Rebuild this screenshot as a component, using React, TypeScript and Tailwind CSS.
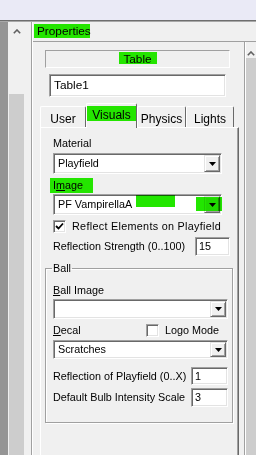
import React from "react";

const sunken =
  "border border-t-[#a0a0a0] border-l-[#a0a0a0] border-r-white border-b-white shadow-[inset_1px_1px_0_#696969,inset_-1px_-1px_0_#e3e3e3]";
const raised =
  "border border-t-[#e3e3e3] border-l-[#e3e3e3] border-r-[#696969] border-b-[#696969] shadow-[inset_1px_1px_0_#ffffff,inset_-1px_-1px_0_#a0a0a0]";

function Arrow() {
  return (
    <svg width="7" height="4" viewBox="0 0 7 4">
      <polygon points="0,0 7,0 3.5,4" fill="#000" />
    </svg>
  );
}

function Chevron() {
  return (
    <svg width="8" height="5" viewBox="0 0 8 5">
      <polyline points="0.8,4.2 4,1 7.2,4.2" fill="none" stroke="#606060" strokeWidth="1.6" />
    </svg>
  );
}

function Combo({ text, w, h, ml }: { text: string; w: string; h: string; ml: string }) {
  return (
    <div className={`${w} ${h} ${ml} ${sunken} bg-white flex items-stretch p-px`}>
      <div className="flex-1 flex items-center pl-[3px] leading-none">{text}</div>
      <div className={`w-[16px] ${raised} bg-[#f0f0f0] flex items-center justify-center`}>
        <Arrow />
      </div>
    </div>
  );
}

function Check({ checked }: { checked: boolean }) {
  return (
    <div className={`w-[13px] h-[13px] ${sunken} bg-white flex items-center justify-center shrink-0`}>
      {checked && (
        <svg width="9" height="9" viewBox="0 0 9 9">
          <path d="M1 4 L3.5 6.5 L8 1.5" fill="none" stroke="#000" strokeWidth="1.8" />
        </svg>
      )}
    </div>
  );
}

const tabBase =
  "border-t border-l border-t-white border-l-white border-r border-r-[#696969] rounded-t-[2px] flex items-start justify-center";

export default function App() {
  return (
    <div className="relative w-[256px] h-[455px] overflow-hidden bg-[#f0f0f0] flex flex-col font-['Liberation_Sans',Arial,sans-serif] text-[10.8px] text-black leading-[13px]">
      <div className="h-[20px] shrink-0 bg-[#eaeaf6]" />
      <div className="h-px shrink-0 bg-[#6e6e6e]" />
      <div className="h-px shrink-0 bg-[#a8a8a8]" />
      <div className="flex flex-1 min-h-0">
        {/* left strip */}
        <div className="w-[8px] bg-[#959595]" />
        <div className="w-[17px] flex flex-col bg-[#f0f0f0]">
          <div className="h-[72px] flex justify-center pt-[7px]">
            <Chevron />
          </div>
          <div className="flex-1 bg-[#cdcdcd] mx-px" />
        </div>
        <div className="w-[6px] bg-[#f0f0f0]" />
        <div className="w-px bg-[#a0a0a0]" />
        <div className="w-px bg-white" />
        {/* right area */}
        <div className="flex-1 flex flex-col min-w-0">
          <div className="h-[19px] flex items-center pl-[4px] text-[11.8px]">Properties</div>
          <div className="h-px bg-[#a0a0a0]" />
          <div className="flex flex-1 min-h-0">
            <div className="w-[211px] flex flex-col">
              <div className="mt-[8px] ml-[12px] w-[185px] h-[18px] border border-t-[#a0a0a0] border-l-[#a0a0a0] border-r-white border-b-white flex items-center justify-center text-[11.8px]">
                Table
              </div>
              <div className={`mt-[6px] ml-[16px] w-[177px] h-[23px] ${sunken} bg-white flex items-center pl-[4px] text-[11.8px]`}>
                Table1
              </div>
              {/* tabs */}
              <div className="mt-[6px] ml-[7px] h-[25px] -mb-px flex items-end relative z-10 text-[12px]">
                <div className={`w-[46px] h-[21px] mb-px pt-[6px] ${tabBase}`}>User</div>
                <div className={`w-[51px] h-[25px] pt-[5px] bg-[#f0f0f0] ${tabBase}`}>Visuals</div>
                <div className={`w-[49px] h-[21px] mb-px pt-[6px] ${tabBase}`}>Physics</div>
                <div className={`w-[48px] h-[21px] mb-px pt-[6px] ${tabBase}`}>Lights</div>
              </div>
              {/* tab panel */}
              <div className="ml-[7px] w-[199px] flex-1 border-t border-l border-t-white border-l-white border-r border-r-[#696969] shadow-[inset_-1px_0_0_#a0a0a0] flex flex-col">
                <div className="mt-[9px] ml-[12px] h-[13px]">Material</div>
                <div className="mt-[3px]">
                  <Combo text="Playfield" w="w-[169px]" h="h-[21px]" ml="ml-[12px]" />
                </div>
                <div className="mt-[5px] ml-[12px] h-[13px]">
                  I<span className="underline">m</span>age
                </div>
                <div className="mt-[2px]">
                  <Combo text="PF VampirellaA" w="w-[169px]" h="h-[21px]" ml="ml-[12px]" />
                </div>
                <div className="mt-[5px] ml-[12px] h-[13px] flex items-center gap-[6px]">
                  <Check checked />
                  <span className="tracking-[0.3px]">Reflect Elements on Playfield</span>
                </div>
                <div className="mt-[4px] ml-[12px] w-[177px] h-[19px] flex items-center">
                  <span>Reflection Strength (0..100)</span>
                  <div className={`ml-auto w-[35px] h-[19px] ${sunken} bg-white flex items-center pl-[3px]`}>15</div>
                </div>
                <fieldset className="mt-[6px] ml-[4px] w-[188px] p-0 m-0 border border-[#a0a0a0] shadow-[1px_1px_0_#ffffff,inset_1px_1px_0_#ffffff] flex flex-col pb-[15px]">
                  <legend className="ml-[6px] px-[1px] h-[13px] leading-[13px]">Ball</legend>
                  <div className="mt-[9px] ml-[7px] h-[13px]">
                    <span className="underline">B</span>all Image
                  </div>
                  <div className="mt-[2px]">
                    <Combo text="" w="w-[175px]" h="h-[20px]" ml="ml-[7px]" />
                  </div>
                  <div className="mt-[5px] ml-[7px] h-[13px] flex items-center">
                    <span className="w-[93px]">
                      <span className="underline">D</span>ecal
                    </span>
                    <Check checked={false} />
                    <span className="ml-[6px]">Logo Mode</span>
                  </div>
                  <div className="mt-[3px]">
                    <Combo text="Scratches" w="w-[175px]" h="h-[19px]" ml="ml-[7px]" />
                  </div>
                  <div className="mt-[8px] ml-[7px] w-[175px] h-[18px] flex items-center">
                    <span>Reflection of Playfield (0..X)</span>
                    <div className={`ml-auto w-[37px] h-[18px] ${sunken} bg-white flex items-center pl-[3px]`}>1</div>
                  </div>
                  <div className="mt-[3px] ml-[7px] w-[175px] h-[19px] flex items-center">
                    <span>Default Bulb Intensity Scale</span>
                    <div className={`ml-auto w-[37px] h-[19px] ${sunken} bg-white flex items-center pl-[3px]`}>3</div>
                  </div>
                </fieldset>
              </div>
            </div>
            <div className="w-px bg-[#a0a0a0]" />
            <div className="w-px bg-white" />
            <div className="flex-1 flex flex-col">
              <div className="h-[16px] flex justify-center pt-[9px]">
                <Chevron />
              </div>
              <div className="flex-1 bg-[#cdcdcd]" />
            </div>
          </div>
        </div>
      </div>

      {/* green annotation highlights */}
      <div className="absolute z-20 left-[34px] top-[24px] w-[56px] h-[14px] bg-[#26f400] mix-blend-multiply" />
      <div className="absolute z-20 left-[119px] top-[52px] w-[38px] h-[12px] bg-[#26f400] mix-blend-multiply" />
      <div className="absolute z-20 left-[87px] top-[106px] w-[49px] h-[15px] bg-[#26f400] mix-blend-multiply" />
      <div className="absolute z-20 left-[50px] top-[178px] w-[43px] h-[15px] bg-[#26f400] mix-blend-multiply" />
      <div className="absolute z-20 left-[136px] top-[195px] w-[39px] h-[12px] bg-[#22e600] mix-blend-multiply" />
      <div className="absolute z-20 left-[196px] top-[197px] w-[26px] h-[14px] bg-[#22e600] mix-blend-multiply" />
    </div>
  );
}
